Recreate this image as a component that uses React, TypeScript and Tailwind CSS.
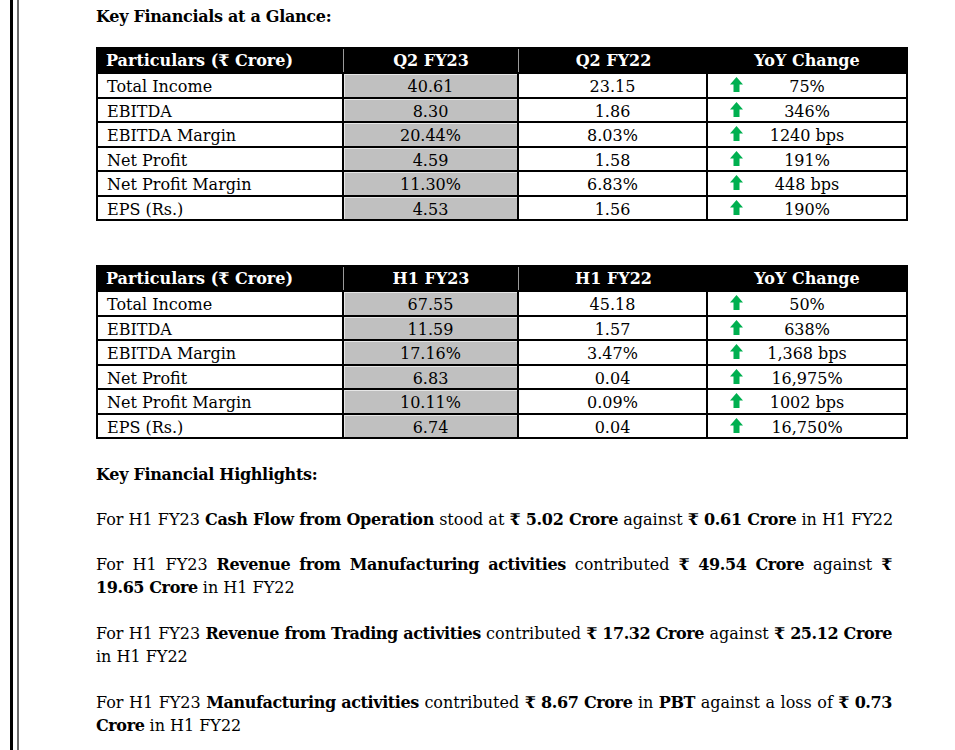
import React from "react";

type Row = [string, string, string, string];

const t1: Row[] = [
  ["Total Income", "40.61", "23.15", "75%"],
  ["EBITDA", "8.30", "1.86", "346%"],
  ["EBITDA Margin", "20.44%", "8.03%", "1240 bps"],
  ["Net Profit", "4.59", "1.58", "191%"],
  ["Net Profit Margin", "11.30%", "6.83%", "448 bps"],
  ["EPS (Rs.)", "4.53", "1.56", "190%"],
];

const t2: Row[] = [
  ["Total Income", "67.55", "45.18", "50%"],
  ["EBITDA", "11.59", "1.57", "638%"],
  ["EBITDA Margin", "17.16%", "3.47%", "1,368 bps"],
  ["Net Profit", "6.83", "0.04", "16,975%"],
  ["Net Profit Margin", "10.11%", "0.09%", "1002 bps"],
  ["EPS (Rs.)", "6.74", "0.04", "16,750%"],
];

const Arrow = () => (
  <svg width="13" height="15" viewBox="0 0 13 15" className="block">
    <polygon points="6.5,0 13,7.5 9.5,7.5 9.5,15 3.5,15 3.5,7.5 0,7.5" fill="#00b050" />
  </svg>
);

function Table({ head, rows }: { head: Row; rows: Row[] }) {
  return (
    <div className="w-[812px] border-2 border-black">
      <div className="grid grid-cols-[246px_175px_189px_198px] h-[25px] bg-black text-white font-bold border-b-2 border-black">
        <div className="pl-[8px] pt-[2px] leading-[19px] border-r border-[#9a9a9a]">{head[0]}</div>
        <div className="text-center pt-[2px] leading-[19px] border-r border-[#9a9a9a]">{head[1]}</div>
        <div className="text-center pt-[2px] leading-[19px]">{head[2]}</div>
        <div className="text-center pt-[2px] leading-[19px]">{head[3]}</div>
      </div>
      {rows.map((r, i) => (
        <div
          key={i}
          className={
            "grid grid-cols-[246px_175px_189px_198px] " +
            (i < rows.length - 1 ? "h-[24.5px] border-b-2 border-black" : "h-[22.5px]")
          }
        >
          <div className="pl-[9px] pt-[3px] leading-[19px] border-r-2 border-black">{r[0]}</div>
          <div className="text-center pt-[3px] leading-[19px] border-r-2 border-black bg-[#c0c0c0] shadow-[inset_1px_1px_0_#e6e6e6]">
            {r[1]}
          </div>
          <div className="text-center pt-[3px] leading-[19px] border-r-2 border-black">{r[2]}</div>
          <div className="grid items-start">
            <div className="col-start-1 row-start-1 justify-self-start ml-[22px] mt-[3px]">
              <Arrow />
            </div>
            <div className="col-start-1 row-start-1 justify-self-center pt-[3px] leading-[19px]">{r[3]}</div>
          </div>
        </div>
      ))}
    </div>
  );
}

const B = ({ children }: { children: React.ReactNode }) => (
  <span className="font-bold tracking-[-0.4px]">{children}</span>
);

const B1 = ({ children }: { children: React.ReactNode }) => (
  <span className="font-bold tracking-[-0.25px]">{children}</span>
);

export default function App() {
  return (
    <div className="flex min-h-[750px] bg-white text-black font-['DejaVu_Serif',serif] text-[16px]">
      <div className="ml-[10px] w-[3px] bg-black" />
      <div className="ml-[4px] w-[2px] bg-[#6b6b6b]" />
      <div className="ml-[77px] flex flex-col">
        <div className="pt-[5px] leading-[23px] font-bold tracking-[-0.3px]">Key Financials at a Glance:</div>
        <div className="mt-[19px]">
          <Table head={["Particulars (₹ Crore)", "Q2 FY23", "Q2 FY22", "YoY Change"]} rows={t1} />
        </div>
        <div className="mt-[44px]">
          <Table head={["Particulars (₹ Crore)", "H1 FY23", "H1 FY22", "YoY Change"]} rows={t2} />
        </div>
        <div className="mt-[24px] leading-[23px] font-bold tracking-[-0.3px]">Key Financial Highlights:</div>
        <div className="mt-[22px] leading-[23px] w-[796px] whitespace-nowrap">
          For H1 FY23 <B1>Cash Flow from Operation</B1> stood at <B1>₹ 5.02 Crore</B1> against <B1>₹ 0.61 Crore</B1> in H1 FY22
        </div>
        <div className="mt-[22px] leading-[23px] w-[796px]">
          <div className="text-justify [text-align-last:justify]">
            For H1 FY23 <B>Revenue from Manufacturing activities</B> contributed <B>₹ 49.54 Crore</B> against <B>₹</B>
          </div>
          <div>
            <B>19.65 Crore</B> in H1 FY22
          </div>
        </div>
        <div className="mt-[23px] leading-[23px] w-[796px]">
          <div className="text-justify [text-align-last:justify] [word-spacing:-2px]">
            For H1 FY23 <B>Revenue from Trading activities</B> contributed <B>₹ 17.32 Crore</B> against <B>₹ 25.12 Crore</B>
          </div>
          <div>in H1 FY22</div>
        </div>
        <div className="mt-[23px] leading-[23px] w-[796px]">
          <div className="text-justify [text-align-last:justify]">
            For H1 FY23 <B>Manufacturing activities</B> contributed <B>₹ 8.67 Crore</B> in <B>PBT</B> against a loss of <B>₹ 0.73</B>
          </div>
          <div>
            <B>Crore</B> in H1 FY22
          </div>
        </div>
      </div>
    </div>
  );
}
